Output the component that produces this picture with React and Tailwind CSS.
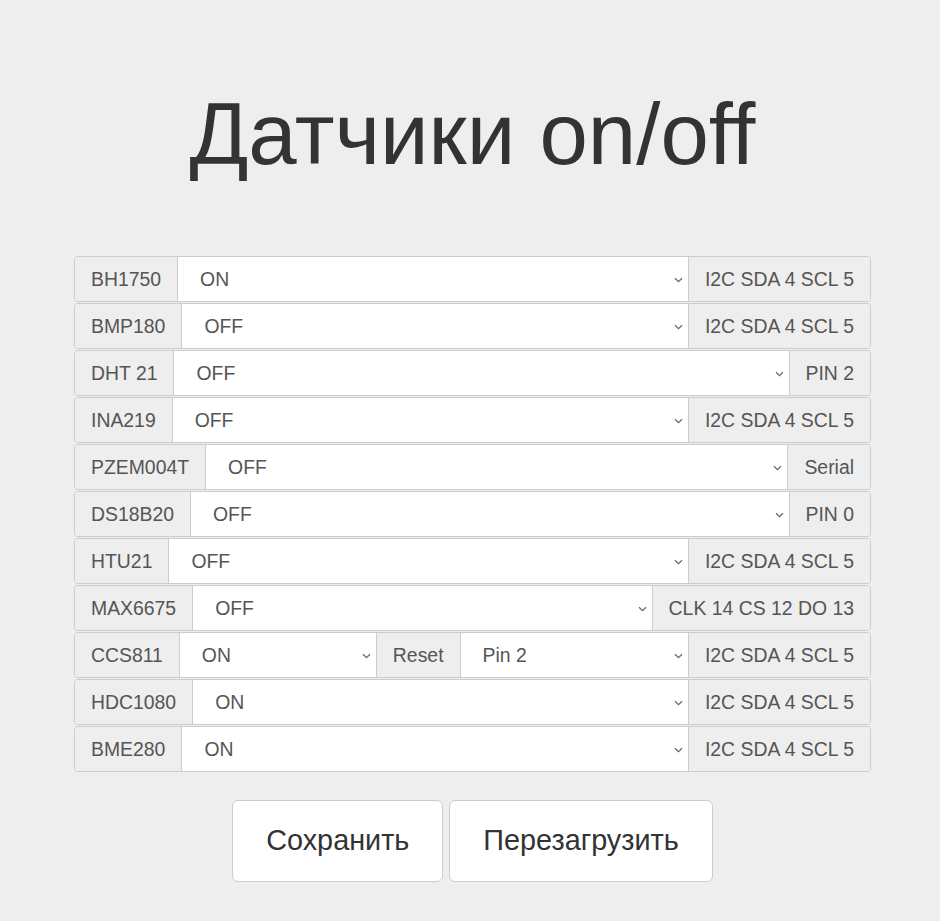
const rows = [
  { name: "BH1750", value: "ON", pins: "I2C SDA 4 SCL 5" },
  { name: "BMP180", value: "OFF", pins: "I2C SDA 4 SCL 5" },
  { name: "DHT 21", value: "OFF", pins: "PIN 2" },
  { name: "INA219", value: "OFF", pins: "I2C SDA 4 SCL 5" },
  { name: "PZEM004T", value: "OFF", pins: "Serial" },
  { name: "DS18B20", value: "OFF", pins: "PIN 0" },
  { name: "HTU21", value: "OFF", pins: "I2C SDA 4 SCL 5" },
  { name: "MAX6675", value: "OFF", pins: "CLK 14 CS 12 DO 13" },
  { name: "CCS811", value: "ON", pins: "I2C SDA 4 SCL 5", reset: "Pin 2" },
  { name: "HDC1080", value: "ON", pins: "I2C SDA 4 SCL 5" },
  { name: "BME280", value: "ON", pins: "I2C SDA 4 SCL 5" },
];

const Chevron = () => (
  <svg width="9" height="6" viewBox="0 0 9 6" className="shrink-0">
    <path d="M1 1.2 L4.5 4.6 L8 1.2" fill="none" stroke="#666" strokeWidth="1.2" />
  </svg>
);

const Addon = ({ children, last }) => (
  <div
    className={`flex items-center bg-[#eee] px-4 pt-px whitespace-nowrap ${
      last ? "" : "border-r border-[#ccc]"
    }`}
  >
    {children}
  </div>
);

const Select = ({ value, grow = true, width }) => (
  <div
    className={`flex items-center justify-between bg-white pl-[22px] pr-[5px] pt-px border-r border-[#ccc] ${
      grow ? "flex-1" : ""
    }`}
    style={width ? { width } : undefined}
  >
    <span>{value}</span>
    <Chevron />
  </div>
);

export default function App() {
  return (
    <div
      className="min-h-[921px] bg-[#eee] pl-[5px] text-[#555]"
      style={{ fontFamily: '"Liberation Sans", Arial, sans-serif' }}
    >
      <h1 className="pt-[86px] text-center text-[87px] leading-[96px] text-[#333]">
        Датчики on/off
      </h1>
      <div className="mx-auto mt-[74px] flex w-[797px] flex-col gap-px text-[19.4px]">
        {rows.map((r) => (
          <div
            key={r.name}
            className="flex h-[46px] overflow-hidden rounded border border-[#ccc]"
          >
            <Addon>{r.name}</Addon>
            {r.reset ? (
              <>
                <Select value={r.value} grow={false} width={197} />
                <Addon>Reset</Addon>
                <Select value={r.reset} />
              </>
            ) : (
              <Select value={r.value} />
            )}
            <Addon last>{r.pins}</Addon>
          </div>
        ))}
      </div>
      <div className="mt-[28px] flex justify-center gap-[6px] text-[28.8px] text-[#333]">
        <button className="h-[82px] rounded-md border border-[#ccc] bg-white px-[33px]">
          Сохранить
        </button>
        <button className="h-[82px] rounded-md border border-[#ccc] bg-white px-[33px]">
          Перезагрузить
        </button>
      </div>
    </div>
  );
}
